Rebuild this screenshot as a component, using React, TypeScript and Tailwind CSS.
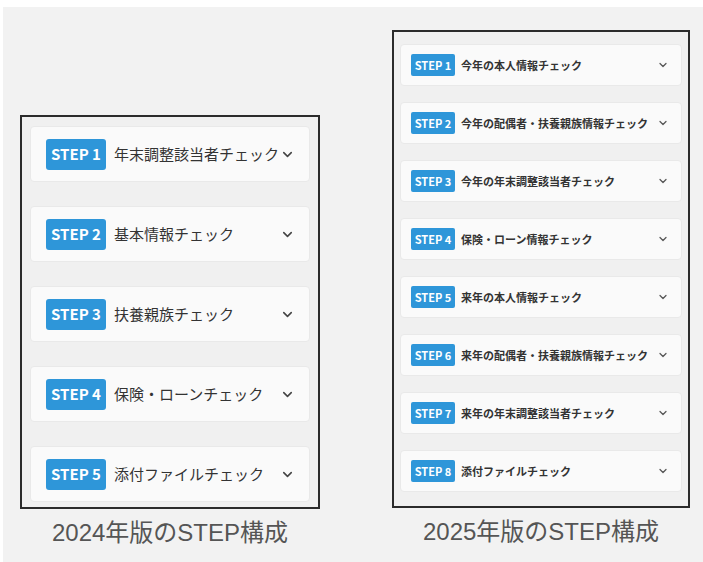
import React from 'react';
import { ChevronDown } from 'lucide-react';

const steps2024 = [
  '年末調整該当者チェック',
  '基本情報チェック',
  '扶養親族チェック',
  '保険・ローンチェック',
  '添付ファイルチェック',
];

const steps2025 = [
  '今年の本人情報チェック',
  '今年の配偶者・扶養親族情報チェック',
  '今年の年末調整該当者チェック',
  '保険・ローン情報チェック',
  '来年の本人情報チェック',
  '来年の配偶者・扶養親族情報チェック',
  '来年の年末調整該当者チェック',
  '添付ファイルチェック',
];

const font = { fontFamily: '"Noto Sans CJK JP", sans-serif' };
const titleFont = { fontFamily: '"Liberation Sans", "Noto Sans CJK JP", sans-serif' };

const App: React.FC = () => {
  return (
    <div className="w-[703px] h-[562px] bg-white pt-[7px] pl-[3px]" style={font}>
      <div className="h-full bg-[#f2f2f2] flex items-start pl-[17px] pr-[13px]">
        {/* 2024 */}
        <div className="flex flex-col items-center mt-[108px]">
          <div className="w-[300px] border-2 border-[#2b2b2b] bg-[#f0f0f0] px-[8px] pt-[9px] pb-[5px] flex flex-col gap-[24px]">
            {steps2024.map((label, i) => (
              <div
                key={label}
                className="h-[56px] bg-[#fafafa] border border-[#e9e9e9] rounded-[4px] flex items-center pl-[15px] pr-[14px]"
              >
                <span className="w-[60px] h-[31px] shrink-0 rounded-[3px] bg-[#2e96d9] text-white text-[15px] font-bold flex items-center justify-center">
                  STEP {i + 1}
                </span>
                <span className="ml-[8px] text-[15px] font-normal text-[#333] whitespace-nowrap flex-1">{label}</span>
                <ChevronDown size={15} strokeWidth={2.5} className="text-[#444] shrink-0" />
              </div>
            ))}
          </div>
          <div className="mt-[8px] text-[24px] leading-[32px] text-[#555]" style={titleFont}>
            2024年版のSTEP構成
          </div>
        </div>

        {/* 2025 */}
        <div className="flex flex-col items-center ml-[72px] mt-[23px]">
          <div className="w-[298px] border-2 border-[#2b2b2b] bg-[#f0f0f0] px-[6px] pt-[12px] pb-[14px] flex flex-col gap-[16px]">
            {steps2025.map((label, i) => (
              <div
                key={label}
                className="h-[42px] bg-[#fafafa] border border-[#e9e9e9] rounded-[4px] flex items-center pl-[10px] pr-[12px]"
              >
                <span className="w-[44px] h-[22px] shrink-0 rounded-[2px] bg-[#2e96d9] text-white text-[11px] font-bold flex items-center justify-center">
                  STEP {i + 1}
                </span>
                <span className="ml-[6px] text-[11px] font-bold text-[#333] whitespace-nowrap flex-1">{label}</span>
                <ChevronDown size={12} strokeWidth={2.5} className="text-[#555] shrink-0" />
              </div>
            ))}
          </div>
          <div className="mt-[8px] text-[24px] leading-[32px] text-[#555]" style={titleFont}>
            2025年版のSTEP構成
          </div>
        </div>
      </div>
    </div>
  );
};

export default App;
